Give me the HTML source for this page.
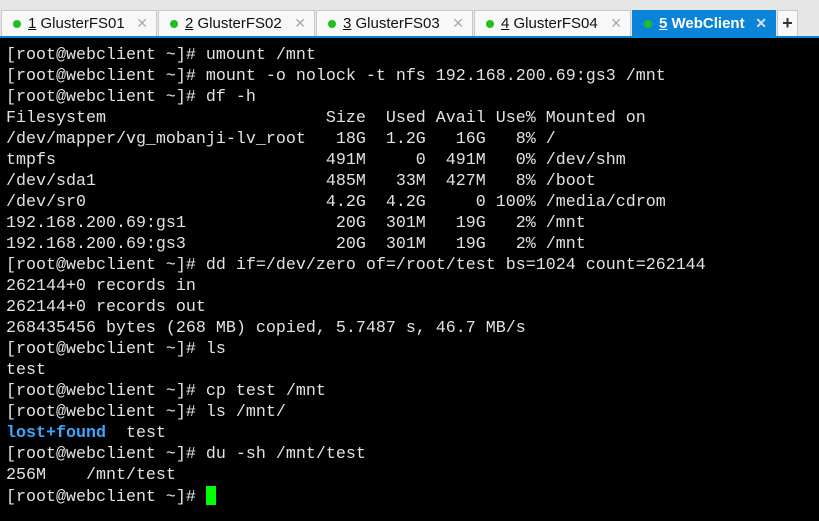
<!DOCTYPE html>
<html><head><meta charset="utf-8"><style>
*{margin:0;padding:0;box-sizing:border-box}
body{width:819px;height:521px;overflow:hidden;background:#000;font-family:"Liberation Sans",sans-serif;position:relative}
#bar{position:absolute;left:0;top:0;width:819px;height:37px;background:#e6e6e6}
.tab{position:absolute;top:10px;height:27px;background:#f8f8f8;border:1px solid #c8c8c8;border-bottom:none;font-size:15px;color:#111;line-height:25px}
.tab .d{position:absolute;left:11px;top:9px;width:8px;height:8px;border-radius:50%;background:#1fbf1f}
.tab .t{position:absolute;left:26px;top:0}
.tab .x{position:absolute;right:8px;top:0;color:#aaa;font-size:14px}
.tab u{text-decoration:underline}
.act{background:#0a84d8;color:#fff;font-weight:bold;border-color:#0a84d8}
.act .x{color:#dde}
#line{position:absolute;left:0;top:36px;width:819px;height:2px;background:#0a84d8}
#term{position:absolute;left:6px;top:45px;font-family:"Liberation Mono",monospace;font-size:16.67px;line-height:21px;color:#e2e2e2;white-space:pre}
.b{color:#3aa6ff;font-weight:bold}
.c{display:inline-block;width:10px;height:19px;background:#00ff00;vertical-align:-4px}
</style></head><body>
<div id="bar">
<div class="tab" style="left:1px;width:156px"><span class="d"></span><span class="t"><u>1</u> GlusterFS01</span><span class="x">✕</span></div>
<div class="tab" style="left:158px;width:157px"><span class="d"></span><span class="t"><u>2</u> GlusterFS02</span><span class="x">✕</span></div>
<div class="tab" style="left:316px;width:157px"><span class="d"></span><span class="t"><u>3</u> GlusterFS03</span><span class="x">✕</span></div>
<div class="tab" style="left:474px;width:157px"><span class="d"></span><span class="t"><u>4</u> GlusterFS04</span><span class="x">✕</span></div>
<div class="tab act" style="left:632px;width:144px"><span class="d"></span><span class="t"><u>5</u> WebClient</span><span class="x">✕</span></div>
<div class="tab" style="left:777px;width:21px;text-align:center;font-weight:bold;font-size:18px;color:#333">+</div>
</div>
<div id="line"></div>
<div id="term">[root@webclient ~]# umount /mnt
[root@webclient ~]# mount -o nolock -t nfs 192.168.200.69:gs3 /mnt
[root@webclient ~]# df -h
Filesystem                      Size  Used Avail Use% Mounted on
/dev/mapper/vg_mobanji-lv_root   18G  1.2G   16G   8% /
tmpfs                           491M     0  491M   0% /dev/shm
/dev/sda1                       485M   33M  427M   8% /boot
/dev/sr0                        4.2G  4.2G     0 100% /media/cdrom
192.168.200.69:gs1               20G  301M   19G   2% /mnt
192.168.200.69:gs3               20G  301M   19G   2% /mnt
[root@webclient ~]# dd if=/dev/zero of=/root/test bs=1024 count=262144
262144+0 records in
262144+0 records out
268435456 bytes (268 MB) copied, 5.7487 s, 46.7 MB/s
[root@webclient ~]# ls
test
[root@webclient ~]# cp test /mnt
[root@webclient ~]# ls /mnt/
<span class="b">lost+found</span>  test
[root@webclient ~]# du -sh /mnt/test
256M    /mnt/test
[root@webclient ~]# <span class="c"></span></div>
</body></html>
